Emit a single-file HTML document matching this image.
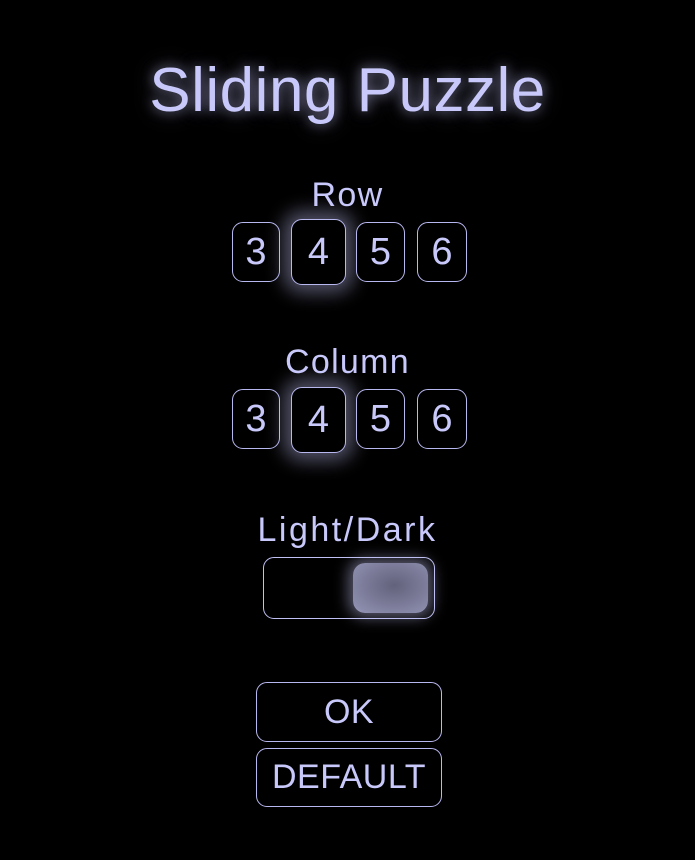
<!DOCTYPE html>
<html><head><meta charset="utf-8"><style>
html,body{margin:0;padding:0;background:#000;}
body{width:695px;height:860px;position:relative;overflow:hidden;font-family:"Liberation Sans",sans-serif;color:#c8c8fa;}
.t{position:absolute;left:0;width:695px;text-align:center;white-space:nowrap;}
.title{top:53px;font-size:62px;letter-spacing:0.5px;line-height:76px;text-shadow:0 0 12px rgba(200,200,255,.55),0 0 24px rgba(200,200,255,.3);}
.lbl{font-size:34px;line-height:40px;letter-spacing:1.3px;}
.b{position:absolute;box-sizing:border-box;border:1.3px solid #b8b8f0;border-radius:11px;display:flex;align-items:center;justify-content:center;font-size:38px;background:#000;}
.sel{box-shadow:0 0 18px 8px rgba(200,200,255,.4);border-width:1.6px;}
.btn{position:absolute;left:256px;width:186px;box-sizing:border-box;border:1.3px solid #b8b8f0;border-radius:11px;display:flex;align-items:center;justify-content:center;font-size:34px;letter-spacing:0.5px;}
</style></head><body>
<div class="t title">Sliding Puzzle</div>

<div class="t lbl" style="top:175px">Row</div>
<div class="b" style="left:232px;top:222px;width:48px;height:60px">3</div>
<div class="b sel" style="left:291px;top:219px;width:55px;height:66px">4</div>
<div class="b" style="left:356px;top:222px;width:49px;height:60px">5</div>
<div class="b" style="left:417px;top:222px;width:50px;height:60px">6</div>

<div class="t lbl" style="top:342px">Column</div>
<div class="b" style="left:232px;top:389px;width:48px;height:60px">3</div>
<div class="b sel" style="left:291px;top:387px;width:55px;height:66px">4</div>
<div class="b" style="left:356px;top:389px;width:49px;height:60px">5</div>
<div class="b" style="left:417px;top:389px;width:50px;height:60px">6</div>

<div class="t lbl" style="top:510px;letter-spacing:2.5px">Light/Dark</div>
<div style="position:absolute;left:263px;top:557px;width:172px;height:62px;box-sizing:border-box;border:1.3px solid #c0c0f5;border-radius:11px;"></div>
<div style="position:absolute;left:353px;top:563px;width:75px;height:50px;border-radius:12px;background:radial-gradient(ellipse at 55% 45%,#62627c,#8a8aaa 80%,#9a9abc);box-shadow:0 0 14px 5px rgba(190,190,240,.45);"></div>

<div class="btn" style="top:682px;height:60px">OK</div>
<div class="btn" style="top:748px;height:59px">DEFAULT</div>
</body></html>
